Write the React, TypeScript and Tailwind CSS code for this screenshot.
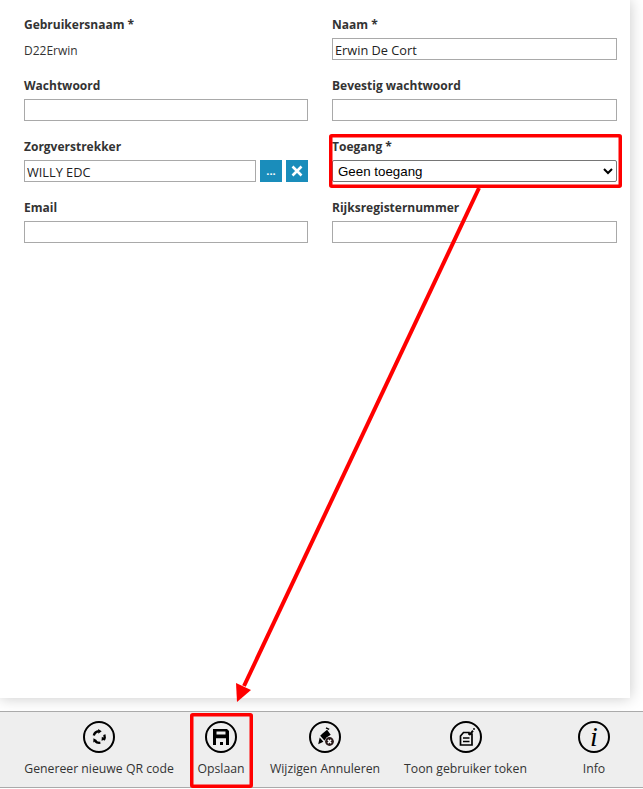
import React from "react";

const font = "font-['Open_Sans',sans-serif]";
const labelClass = "block h-[17px] text-[12px] leading-[17px] font-bold text-[#333] mb-[5px]";
const inputClass = "block w-full h-[22px] border border-[#a9a9a9] bg-white px-[2px] pt-[1px] text-[12.75px] text-[#222] outline-none font-['Open_Sans',sans-serif]";

function Ring({ children }: { children: React.ReactNode }) {
  return (
    <svg width="34" height="34" viewBox="0 0 34 34" className="block">
      <circle cx="17" cy="17" r="15" fill="none" stroke="#000" strokeWidth="2" />
      {children}
    </svg>
  );
}

function RefreshIcon() {
  return (
    <Ring>
      <g transform="translate(17 17) scale(0.84) translate(-17 -17)">
        <path d="M10.8 15.2a6.6 6.6 0 0 1 6-5" fill="none" stroke="#000" strokeWidth="2.8" />
        <path d="M16 7.4l4.2 2.8-4 3z" fill="#000" />
        <path d="M23.4 14.2a6.8 6.8 0 0 1-.9 6.4" fill="none" stroke="#000" strokeWidth="2.8" />
        <path d="M25 19.8l-5 1.6.4-4.8z" fill="#000" />
        <path d="M18.6 23.8a6.8 6.8 0 0 1-6.4-2.2" fill="none" stroke="#000" strokeWidth="2.8" />
        <path d="M10.2 23.6l.2-5 4.3 2.4z" fill="#000" />
      </g>
    </Ring>
  );
}

function SaveIcon() {
  return (
    <Ring>
      <path
        fillRule="evenodd"
        d="M9 9h14l2 2v14H9zM12.5 11.6v3h9v-3zM12 18.2V25h10v-6.8zM16 22h3v3h-3z"
        fill="#000"
      />
    </Ring>
  );
}

function EditCancelIcon() {
  return (
    <Ring>
      <path d="M14.5 13.5l4.6-3.7 3.6 5-1.8 1.2a6 6 0 0 0-3.9 4l-.6.5-4.2-4.8z" fill="#000" />
      <path d="M11.7 17.5l3.7 4.2-5.2 2.6z" fill="#000" />
      <path d="M18 7.8l3.2 1.6" stroke="#000" strokeWidth="1.4" fill="none" />
      <circle cx="21.5" cy="21.5" r="4.4" fill="#2a1a1a" />
      <path d="M19.8 19.8l3.4 3.4M23.2 19.8l-3.4 3.4" stroke="#fff" strokeWidth="1.4" />
    </Ring>
  );
}

function TokenIcon() {
  return (
    <Ring>
      <path d="M14.5 12.5h5.5v1.5h3v11H11.5v-9z" fill="none" stroke="#000" strokeWidth="1.7" />
      <path d="M14 18h6.5M14 21.5h6.5" stroke="#000" strokeWidth="1.5" />
      <path d="M19.5 14.5l3.8-4.4 1.4 1.3-3.8 4.3z" fill="#000" />
      <circle cx="25" cy="9" r="0.9" fill="#000" />
    </Ring>
  );
}

function InfoIcon() {
  return (
    <Ring>
      <text x="17" y="26" textAnchor="middle" fontSize="28" fontStyle="italic" fontFamily="'Liberation Serif', serif" fill="#000">
        i
      </text>
    </Ring>
  );
}

function ToolbarItem({ icon, label, className }: { icon: React.ReactNode; label: string; className: string }) {
  return (
    <button className={`shrink-0 flex flex-col items-center pt-[8px] ${className}`}>
      {icon}
      <span className="mt-[6px] text-[12.25px] leading-[17px] whitespace-nowrap text-[#333]">{label}</span>
    </button>
  );
}

export default function App() {
  return (
    <div className={`relative w-[643px] h-[789px] overflow-hidden bg-white flex flex-col ${font}`}>
      <div className="h-[698px] w-[630px] bg-white shadow-[0_0_14px_rgba(0,0,0,0.22)] shrink-0 pl-[24px] pt-[16px]">
        <div className="grid grid-cols-[284px_285px] gap-x-[24px] gap-y-[17px]">
          <div>
            <label className={labelClass}>Gebruikersnaam *</label>
            <div className="h-[22px] pt-[2px] text-[12px] leading-[22px] text-[#333]">D22Erwin</div>
          </div>
          <div>
            <label className={labelClass}>Naam *</label>
            <input className={inputClass} defaultValue="Erwin De Cort" />
          </div>
          <div>
            <label className={labelClass}>Wachtwoord</label>
            <input className={inputClass} type="password" />
          </div>
          <div>
            <label className={labelClass}>Bevestig wachtwoord</label>
            <input className={inputClass} type="password" />
          </div>
          <div>
            <label className={labelClass}>Zorgverstrekker</label>
            <div className="flex">
              <input className={inputClass} defaultValue="WILLY EDC" />
              <button className="ml-[4px] w-[22px] h-[22px] shrink-0 bg-[#1a8dbb] text-white text-[11px] font-bold leading-[22px]">...</button>
              <button className="ml-[4px] w-[22px] h-[22px] shrink-0 bg-[#1a8dbb] flex items-center justify-center">
                <svg width="12" height="12" viewBox="0 0 12 12">
                  <path d="M1.5 1.5l9 9M10.5 1.5l-9 9" stroke="#fff" strokeWidth="2.6" />
                </svg>
              </button>
            </div>
          </div>
          <div>
            <label className={labelClass}>Toegang *</label>
            <select
              defaultValue="geen"
              className="block w-full h-[22px] rounded-[2px] border border-[#767676] bg-white pl-[1px] text-[13.33px] text-black font-['Liberation_Sans',sans-serif] appearance-auto"
            >
              <option value="geen">Geen toegang</option>
            </select>
          </div>
          <div>
            <label className={labelClass}>Email</label>
            <input className={inputClass} />
          </div>
          <div>
            <label className={labelClass}>Rijksregisternummer</label>
            <input className={inputClass} />
          </div>
        </div>
      </div>

      <div className="mt-[13px] h-[77px] shrink-0 border-y border-[#aaa] bg-[#eee] flex">
        <ToolbarItem icon={<RefreshIcon />} label="Genereer nieuwe QR code" className="w-[174px] ml-[12px]" />
        <ToolbarItem icon={<SaveIcon />} label="Opslaan" className="w-[70px]" />
        <ToolbarItem icon={<EditCancelIcon />} label="Wijzigen Annuleren" className="w-[136px] ml-[1px]" />
        <ToolbarItem icon={<TokenIcon />} label="Toon gebruiker token" className="w-[147px] -ml-[1px]" />
        <ToolbarItem icon={<InfoIcon />} label="Info" className="w-[110px]" />
      </div>

      {/* red annotation drawn on top of the screenshot */}
      <svg className="absolute inset-0 pointer-events-none" width="643" height="789" viewBox="0 0 643 789">
        <rect x="330.75" y="135.75" width="289.5" height="50.5" fill="none" stroke="#f00" strokeWidth="3.5" rx="1" />
        <rect x="191.75" y="714.75" width="59.5" height="71.5" fill="none" stroke="#f00" strokeWidth="3.5" rx="1" />
        <path d="M479 188L244 686" stroke="#f00" strokeWidth="4" fill="none" />
        <path d="M237 702L236 683L251 690Z" fill="#f00" />
      </svg>
    </div>
  );
}
